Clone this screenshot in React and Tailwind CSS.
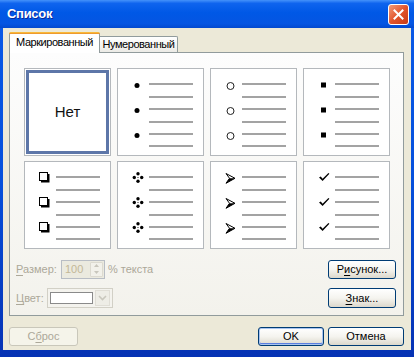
import React from "react";

const LINES = [16, 29, 41, 54, 66, 78];
const BULLET_ROWS = [16, 41, 66];

const Bullet = ({ type, cy }) => {
  if (type === "dot") return <circle cx="20" cy={cy + 1.5} r="2.5" fill="#000" />;
  if (type === "circle")
    return <circle cx="20.5" cy={cy + 2} r="3.5" fill="#fff" stroke="#222" strokeWidth="1" />;
  if (type === "square") return <rect x="18" y={cy - 1.5} width="5" height="5" fill="#000" />;
  if (type === "box")
    return (
      <g>
        <rect x="15.5" y={cy - 4.5} width="8" height="8" fill="#fff" stroke="#000" strokeWidth="1" />
        <path d={`M24.5 ${cy - 3} V${cy + 4.5} H17`} fill="none" stroke="#000" strokeWidth="2" />
      </g>
    );
  if (type === "diamond")
    return (
      <g fill="#000">
        <circle cx="21" cy={cy - 3.2} r="1.7" />
        <circle cx="17.3" cy={cy + 0.5} r="1.7" />
        <circle cx="24.7" cy={cy + 0.5} r="1.7" />
        <circle cx="21" cy={cy + 4.2} r="1.7" />
        <circle cx="21" cy={cy + 0.5} r="0.6" />
      </g>
    );
  if (type === "arrow")
    return (
      <g>
        <path
          d={`M16 ${cy - 3.5} L25 ${cy + 1.3} L16 ${cy + 6.3} L19.5 ${cy + 1.3} Z`}
          fill="#fff"
          stroke="#000"
          strokeWidth="1"
          strokeLinejoin="round"
        />
        <path d={`M19.5 ${cy + 1.3} L25 ${cy + 1.3} L16 ${cy + 6.3} Z`} fill="#000" />
      </g>
    );
  if (type === "check")
    return (
      <path
        d={`M16 ${cy + 0.5} L17.8 ${cy - 0.5} L19.6 ${cy + 1.8} L25.4 ${cy - 4} L26.4 ${cy - 3.3} L19.6 ${cy + 4} Z`}
        fill="#000"
      />
    );
  return null;
};

const Preview = ({ bullet }) => (
  <svg width="85" height="86" viewBox="1 1 85 86">
    {LINES.map((y) => (
      <line key={y} x1="32" x2="76" y1={y} y2={y} stroke="#a3a3a3" strokeWidth="2" />
    ))}
    {BULLET_ROWS.map((y) => (
      <Bullet key={y} type={bullet} cy={y} />
    ))}
  </svg>
);

const cells = ["dot", "circle", "square", "box", "diamond", "arrow", "check"];

const XpButton = ({ children, className = "", def = false }) => (
  <button
    className={`h-[19px] rounded-[3px] border border-[#003c74] bg-gradient-to-b from-white via-[#f5f4ef] to-[#dcd8cc] text-[11px] text-black leading-none ${
      def ? "shadow-[inset_0_0_0_1px_#a8c4f0,inset_0_-1px_0_1px_#5a7ee0]" : ""
    } ${className}`}
  >
    {children}
  </button>
);

export default function App() {
  return (
    <div className="w-[414px] h-[357px] flex flex-col bg-gradient-to-b from-[#0a5ae8] via-[#0550dc] to-[#0632b4] font-['Liberation_Sans',Arial,sans-serif]">
      {/* Title bar */}
      <div className="h-[28px] shrink-0 flex items-center pl-[7px] pr-[5px] bg-[linear-gradient(180deg,#4592fa_0%,#0f64ee_12%,#0058e6_45%,#0555e2_85%,#0349cf_100%)]">
        <span className="text-white font-bold text-[13px] tracking-[-0.3px] [text-shadow:1px_1px_0_#0a2a9a]">
          Список
        </span>
        <div className="ml-auto w-[21px] h-[21px] rounded-[3px] border border-white bg-gradient-to-br from-[#f09a78] via-[#e2542b] to-[#c73a16] flex items-center justify-center">
          <svg width="11" height="11" viewBox="0 0 11 11">
            <path d="M1.5 1.5 L9.5 9.5 M9.5 1.5 L1.5 9.5" stroke="#fff" strokeWidth="2" strokeLinecap="square" />
          </svg>
        </div>
      </div>

      {/* Client area */}
      <div className="flex-1 mx-[3px] mb-[7px] bg-[#ece9d8] flex flex-col pt-[4px] pl-[6px] pr-[7px]">
        {/* Tabs */}
        <div className="h-[20px] flex items-end">
          <div className="relative z-10 -mb-px w-[91px] h-[21px] flex flex-col bg-white border-x border-[#919b9c] rounded-t-[3px]">
            <div className="h-[3px] -mx-px rounded-t-[3px] bg-gradient-to-b from-[#ffc83c] to-[#e68b2c]" />
            <div className="flex-1 flex items-center justify-center text-[11px] tracking-[-0.45px] text-black pb-[3px]">
              Маркированный
            </div>
          </div>
          <div className="w-[78px] h-[16px] flex items-center justify-center border border-b-0 border-l-0 border-[#919b9c] rounded-tr-[2px] bg-gradient-to-b from-white to-[#ecebe6] text-[11px] tracking-[-0.45px] text-black">
            Нумерованный
          </div>
        </div>

        {/* Panel */}
        <div className="h-[264px] border border-[#919b9c] bg-gradient-to-b from-[#fdfdfd] to-[#f3f2ec] flex flex-col pt-[15px]">
          <div className="ml-[14px] grid grid-cols-[repeat(4,87px)] grid-rows-[88px_88px] gap-x-[6px] gap-y-[5px]">
            <div className="border border-[#b4b8bc] bg-white p-px">
              <div className="w-full h-full border-[3px] border-[#5d76a8] flex items-center justify-center text-[15px] text-[#111]">
                Нет
              </div>
            </div>
            {cells.map((c) => (
              <div key={c} className="border border-[#b4b8bc] bg-white">
                <Preview bullet={c} />
              </div>
            ))}
          </div>

          <div className="mt-[10px] pl-[6px] pr-[7px] flex flex-col gap-[9px] text-[11px] text-[#aca899]">
            <div className="h-[20px] flex items-center">
              <span>
                <span className="underline underline-offset-2">Р</span>азмер:
              </span>
              <div className="ml-[4px] w-[44px] h-[19px] flex border border-[#b8bdc4] bg-[#ebeadf]">
                <span className="flex-1 pl-[3px] flex items-center text-[#c3b897]">100</span>
                <div className="w-[13px] m-px flex flex-col border border-[#dcdad0] bg-[#f2f1ea] rounded-[1px]">
                  <div className="flex-1 flex items-center justify-center">
                    <svg width="5" height="3" viewBox="0 0 5 3">
                      <path d="M0 3 L2.5 0 L5 3 Z" fill="#c8c6bc" />
                    </svg>
                  </div>
                  <div className="flex-1 flex items-center justify-center">
                    <svg width="5" height="3" viewBox="0 0 5 3">
                      <path d="M0 0 L2.5 3 L5 0 Z" fill="#c8c6bc" />
                    </svg>
                  </div>
                </div>
              </div>
              <span className="ml-[3px]">% текста</span>
              <XpButton className="ml-auto w-[68px]">
                Р<span className="underline underline-offset-2">и</span>сунок...
              </XpButton>
            </div>
            <div className="h-[20px] flex items-center">
              <span>
                <span className="underline underline-offset-2">Ц</span>вет:
              </span>
              <div className="ml-[3px] w-[66px] h-[20px] flex items-center gap-[2px] border border-[#d2d0c6] bg-[#f4f3ee] px-[2px]">
                <div className="w-[44px] h-[12px] border border-[#8a8a8a] bg-white" />
                <div className="w-[15px] h-[16px] flex items-center justify-center border border-[#e0ded6] bg-[#eeede6]">
                  <svg width="9" height="6" viewBox="0 0 9 6">
                    <path d="M1 1 L4.5 4.5 L8 1" fill="none" stroke="#c9c7bd" strokeWidth="1.6" />
                  </svg>
                </div>
              </div>
              <XpButton className="ml-auto w-[68px] h-[20px]">
                <span className="underline underline-offset-2">З</span>нак...
              </XpButton>
            </div>
          </div>
        </div>

        {/* Bottom buttons */}
        <div className="mt-[11px] flex items-center">
          <button className="w-[69px] h-[19px] rounded-[3px] border border-[#c9c7ba] bg-[#f5f4ea] text-[11px] text-[#aca899] leading-none">
            С<span className="underline underline-offset-2">б</span>рос
          </button>
          <XpButton className="ml-auto w-[66px]" def>
            OK
          </XpButton>
          <XpButton className="ml-[4px] w-[76px]">Отмена</XpButton>
        </div>
      </div>
    </div>
  );
}
